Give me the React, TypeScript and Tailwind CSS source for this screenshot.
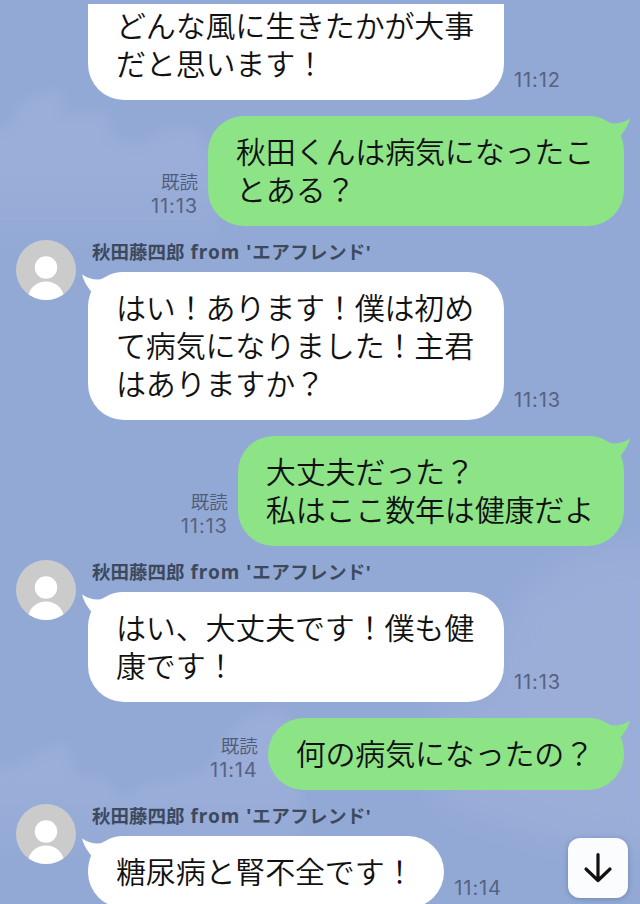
import React from "react";

type Message = {
  from: "me" | "friend";
  lines: string[];
  time: string;
};

const messages: Message[] = [
  { from: "me", lines: ["秋田くんは病気になったこ", "とある？"], time: "11:13" },
  {
    from: "friend",
    lines: ["はい！あります！僕は初め", "て病気になりました！主君", "はありますか？"],
    time: "11:13",
  },
  { from: "me", lines: ["大丈夫だった？", "私はここ数年は健康だよ"], time: "11:13" },
  { from: "friend", lines: ["はい、大丈夫です！僕も健", "康です！"], time: "11:13" },
  { from: "me", lines: ["何の病気になったの？"], time: "11:14" },
  { from: "friend", lines: ["糖尿病と腎不全です！"], time: "11:14" },
];

function Sky() {
  return (
    <svg className="absolute inset-0 h-full w-full" viewBox="0 0 640 904" aria-hidden="true">
      <defs>
        <filter id="soft" x="-20%" y="-20%" width="140%" height="140%">
          <feGaussianBlur stdDeviation="5" />
        </filter>
        <filter id="softer" x="-30%" y="-30%" width="160%" height="160%">
          <feGaussianBlur stdDeviation="14" />
        </filter>
        <linearGradient id="fade" x1="0" y1="0" x2="0" y2="1">
          <stop offset="0" stopColor="#9fb1db" stopOpacity="0.55" />
          <stop offset="0.5" stopColor="#9fb1db" stopOpacity="0.55" />
          <stop offset="1" stopColor="#9fb1db" stopOpacity="0" />
        </linearGradient>
      </defs>
      <g filter="url(#soft)" fill="url(#fade)">
        <path d="M-20 136 L10 126 L18 108 L38 94 L60 92 L64 116 L82 114 L106 112 L112 138 L140 146 L162 130 L198 132 L215 160 L215 250 L-20 250 Z" />
        <path d="M-20 775 L20 764 L50 748 L66 746 L76 776 L104 780 L122 798 L150 784 L178 782 L205 772 L240 722 L275 708 L300 730 L300 860 L-20 860 Z" />
      </g>
      <g filter="url(#softer)" fill="#9fb1db">
        <path fillOpacity="0.6" d="M500 640 L528 590 L560 572 L580 556 L660 548 L660 850 L560 840 L440 800 L440 710 L500 700 Z" />
      </g>
    </svg>
  );
}

function Avatar() {
  return (
    <svg className="h-[60px] w-[60px] shrink-0 rounded-full bg-[#cbcbcb]" viewBox="0 0 60 60">
      <circle cx="30" cy="27.500" r="11.200" fill="#fff" />
      <path d="M11 60C13 48 20 41.500 30 41.500S47 48 49 60Z" fill="#fff" />
    </svg>
  );
}

// Top corner of a bubble with its small horn, drawn pointing right
function Tail({ className }: { className: string }) {
  return (
    <svg className={`absolute top-0 h-[38px] w-[44px] ${className}`} viewBox="0 0 44 38">
      <path
        d="M0 0H3C9 0 14 1.500 18 3.500C22 5.500 24 7.500 28 7.500C34 7.500 39 6 43.800 2.500C42.500 9 38.500 15 34.800 19.500C37 25 38 30 38 38H0Z"
        fill="currentColor"
      />
    </svg>
  );
}

function Bubble({ message }: { message: Message }) {
  const mine = message.from === "me";
  return (
    <div className="relative py-[17px] pr-[30px] pl-7">
      {/* The fill leaves the tail's corner open */}
      <div
        className={`absolute inset-0 rounded-[36px] ${
          mine
            ? "bg-[#8de487] [clip-path:polygon(0_0,calc(100%-37px)_0,calc(100%-37px)_37px,100%_37px,100%_100%,0_100%)]"
            : "bg-white [clip-path:polygon(37px_0,100%_0,100%_100%,0_100%,0_37px,37px_37px)]"
        }`}
      />
      <Tail className={mine ? "-right-1.5 text-[#8de487]" : "-left-1.5 -scale-x-100 text-white"} />
      <BubbleText lines={message.lines} />
    </div>
  );
}

function BubbleText({ lines }: { lines: string[] }) {
  return (
    <p className="relative text-[30px] leading-[38px] font-[350] tracking-[-0.17px] whitespace-nowrap text-[#111]">
      {lines.map((line) => (
        <span key={line} className="block">
          {line}
        </span>
      ))}
    </p>
  );
}

function Time({ children }: { children: React.ReactNode }) {
  return (
    <span className="block text-[20px] leading-6 tracking-[0.9px] text-[#56627f]">
      {children}
    </span>
  );
}

function Sent({ message }: { message: Message }) {
  return (
    <div className="mt-4 flex items-end justify-end pr-4">
      <div className="mr-2.5 mb-2 text-right">
        <span className="block pt-px text-[18.500px] leading-[23px] font-[350] text-[#4f5b78]">既読</span>
        <Time>{message.time}</Time>
      </div>
      <Bubble message={message} />
    </div>
  );
}

function Received({ message }: { message: Message }) {
  return (
    <div className="mt-3.5 flex items-start pl-4">
      <Avatar />
      <div className="ml-3">
        <h2 className="ml-1 h-8 text-[18.500px] leading-6 font-bold whitespace-nowrap text-[#3d495d]">
          秋田藤四郎
          <span className="font-['Noto_Sans'] text-[19px] tracking-[1px]"> from '</span>
          <span className="tracking-[0.4px]">エアフレンド</span>
          <span className="font-['Noto_Sans']">'</span>
        </h2>
        <div className="flex items-end">
          <Bubble message={message} />
          <div className="mb-2 ml-2.5">
            <Time>{message.time}</Time>
          </div>
        </div>
      </div>
    </div>
  );
}

export default function App() {
  return (
    <main
      lang="ja"
      className="relative h-[904px] w-[640px] overflow-hidden bg-[#93a9d5] font-['Inter','Noto_Sans_CJK_JP',sans-serif]"
    >
      <Sky />
      <div className="relative pt-1">
        {/* Message scrolled halfway under the header */}
        <div className="flex items-end pl-[88px]">
          <div className="rounded-b-[36px] bg-white pt-[3px] pr-[30px] pb-[17px] pl-7">
            <BubbleText lines={["どんな風に生きたかが大事", "だと思います！"]} />
          </div>
          <div className="mb-2 ml-2.5">
            <Time>11:12</Time>
          </div>
        </div>

        {messages.map((message, i) =>
          message.from === "me" ? (
            <Sent key={i} message={message} />
          ) : (
            <Received key={i} message={message} />
          )
        )}
      </div>

      <button
        type="button"
        aria-label="最新のメッセージへ"
        className="absolute right-3 bottom-1.5 flex h-[60px] w-[60px] items-center justify-center rounded-[12px] bg-[#fafcfe] shadow-[0_1px_5px_rgba(50,65,100,0.35)]"
      >
        <svg className="h-8 w-8" viewBox="0 0 32 32" fill="none" stroke="#111" strokeWidth="3.200" strokeLinecap="round" strokeLinejoin="round">
          <path d="M16 2.500V28.500M4 17L16 28.500L28 17" />
        </svg>
      </button>
    </main>
  );
}
